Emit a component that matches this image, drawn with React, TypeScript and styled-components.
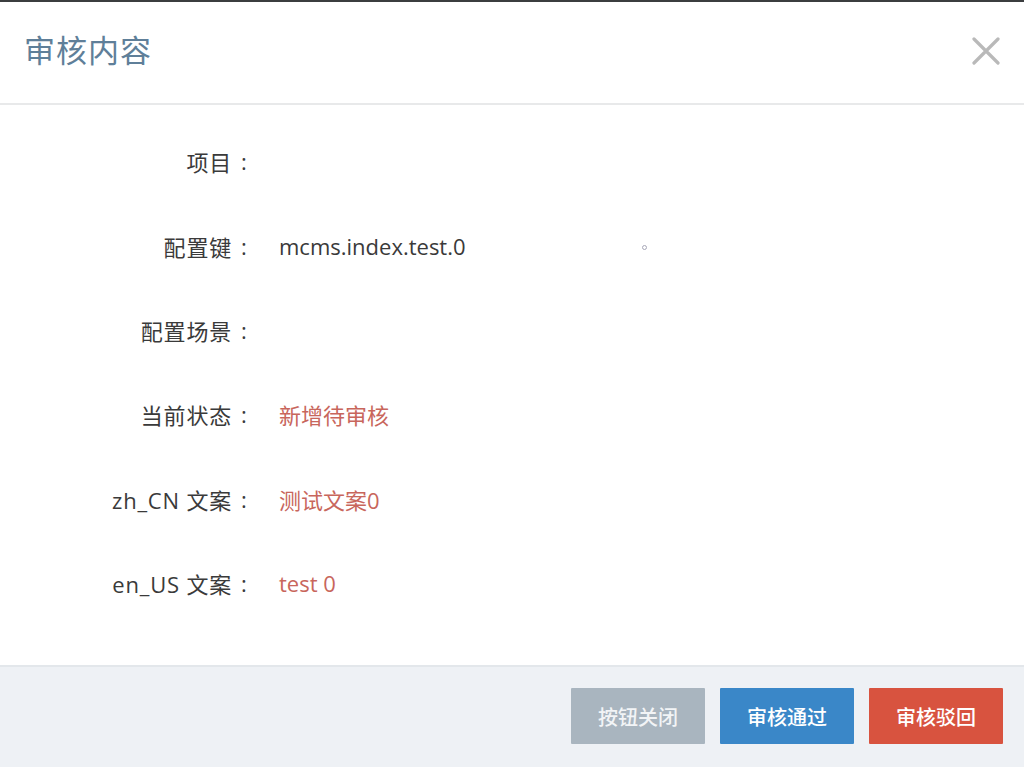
import React from "react";
import styled, { createGlobalStyle } from "styled-components";

const Global = createGlobalStyle`
  html, body { margin: 0; padding: 0; background: #ffffff; }
  body { font-family: "Open Sans", "Noto Sans CJK SC", sans-serif; }
  * { box-sizing: border-box; }
`;

const Modal = styled.div`
  width: 1024px;
  height: 767px;
  display: flex;
  flex-direction: column;
  border-top: 2px solid #3b3d3f;
  background: #ffffff;
`;

const Header = styled.header`
  height: 103px;
  flex: none;
  display: flex;
  align-items: center;
  justify-content: space-between;
  padding: 0 24px 0 24px;
  border-bottom: 2px solid #e8e9ea;
`;

const Title = styled.h1`
  margin: 0;
  font-family: "Noto Sans CJK SC", sans-serif;
  font-weight: 400;
  font-size: 31px;
  color: #5f7f99;
  letter-spacing: 1px;
  transform: translateY(-4px);
`;

const CloseButton = styled.button`
  border: 0;
  background: none;
  padding: 0;
  width: 28px;
  height: 28px;
  cursor: pointer;
  display: flex;
  align-items: center;
  justify-content: center;
  transform: translateY(-2px);
`;

const Body = styled.main`
  flex: 1;
  padding: 14px 0 0 0;
  display: flex;
  flex-direction: column;
`;

const Row = styled.div`
  height: 84.4px;
  display: grid;
  grid-template-columns: 256px 1fr;
  column-gap: 23px;
  align-items: center;
  font-size: 22px;
`;

const Label = styled.div`
  display: flex;
  justify-content: flex-end;
  align-items: center;
  color: #3a3a3a;
  font-family: "Open Sans", "Noto Sans CJK SC", sans-serif;
  letter-spacing: 0.8px;
`;

const Colon = styled.span`
  width: 24px;
  text-align: center;
  letter-spacing: 0;
`;

const Value = styled.div<{ $tone?: "plain" | "red" }>`
  color: ${(p) => (p.$tone === "red" ? "#c8665c" : "#3a3a3a")};
  font-family: "Open Sans", "Noto Sans CJK SC", sans-serif;
  display: flex;
  align-items: center;
`;

const Dot = styled.span`
  display: inline-block;
  width: 5px;
  height: 5px;
  border: 1px solid #a8a8b8;
  border-radius: 50%;
  margin-left: 176px;
  margin-top: 4px;
`;

const Footer = styled.footer`
  height: 102px;
  flex: none;
  background: #eef1f5;
  border-top: 2px solid #e3e7eb;
  display: flex;
  align-items: center;
  justify-content: flex-end;
  padding: 0 21px 0 0;
  gap: 15px;
`;

const Button = styled.button<{ $variant: "gray" | "blue" | "red" }>`
  width: 134px;
  height: 56px;
  border: 0;
  border-radius: 1px;
  font-family: "Noto Sans CJK SC", sans-serif;
  font-size: 20px;
  font-weight: 500;
  color: ${(p) => (p.$variant === "gray" ? "#f2f4f6" : "#ffffff")};
  background: ${(p) =>
    p.$variant === "gray" ? "#a9b5bf" : p.$variant === "blue" ? "#3a87c8" : "#d8533f"};
  cursor: pointer;
  transform: translateY(-1px);
`;

const rows: { label: string; value: React.ReactNode; tone?: "plain" | "red" }[] = [
  { label: "项目", value: "" },
  {
    label: "配置键",
    value: (
      <>
        mcms.index.test.0
        <Dot />
      </>
    ),
  },
  { label: "配置场景", value: "" },
  { label: "当前状态", value: "新增待审核", tone: "red" },
  { label: "zh_CN 文案", value: "测试文案0", tone: "red" },
  { label: "en_US 文案", value: "test 0", tone: "red" },
];

export default function App() {
  return (
    <>
      <Global />
      <Modal>
        <Header>
          <Title>审核内容</Title>
          <CloseButton aria-label="关闭">
            <svg width="28" height="28" viewBox="0 0 28 28">
              <path
                d="M2 2 L26 26 M26 2 L2 26"
                stroke="#b9b9b9"
                strokeWidth="3.2"
                strokeLinecap="round"
              />
            </svg>
          </CloseButton>
        </Header>
        <Body>
          {rows.map((r) => (
            <Row key={r.label}>
              <Label>
                {r.label}
                <Colon>:</Colon>
              </Label>
              <Value $tone={r.tone}>{r.value}</Value>
            </Row>
          ))}
        </Body>
        <Footer>
          <Button $variant="gray">按钮关闭</Button>
          <Button $variant="blue">审核通过</Button>
          <Button $variant="red">审核驳回</Button>
        </Footer>
      </Modal>
    </>
  );
}
